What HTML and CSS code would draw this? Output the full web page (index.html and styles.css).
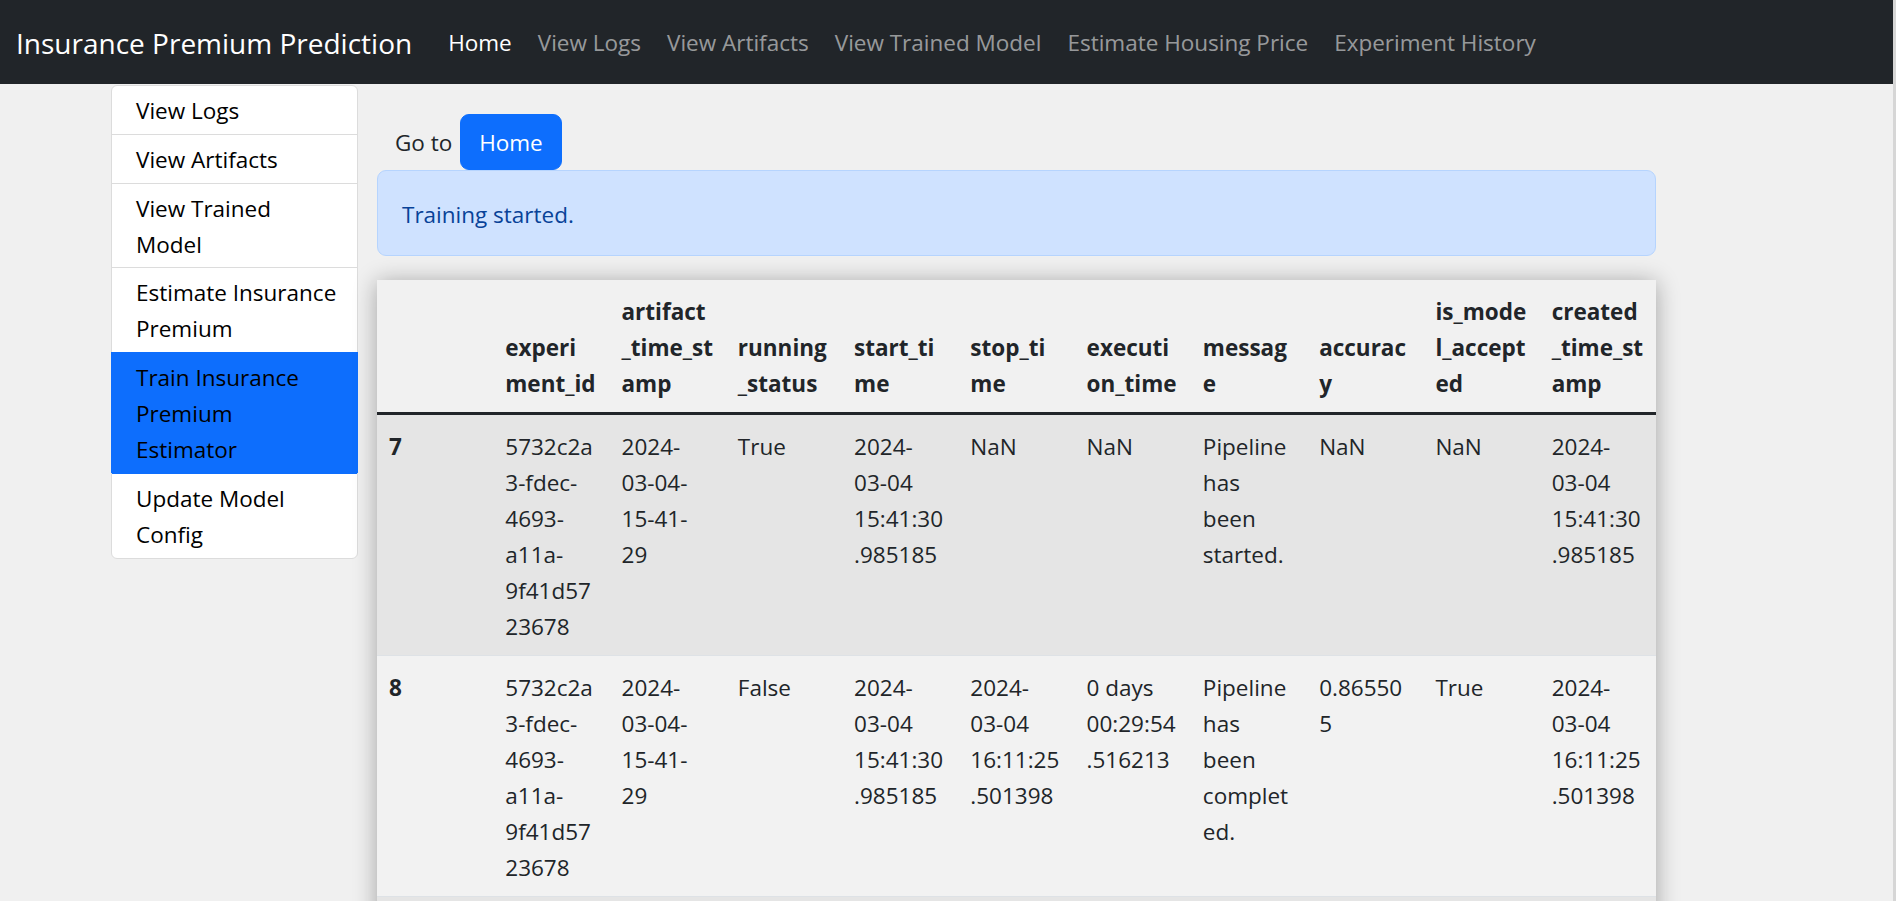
FILE: index.html
```html
<!DOCTYPE html>
<html lang="en">
<head>
<meta charset="utf-8">
<title>Insurance Premium Prediction</title>
<link rel="stylesheet" href="styles.css">
</head>
<body>
<nav class="navbar">
  <a class="brand" href="#">Insurance Premium Prediction</a>
  <ul class="nav">
    <li><a class="nav-link active" href="#">Home</a></li>
    <li><a class="nav-link" href="#">View Logs</a></li>
    <li><a class="nav-link" href="#">View Artifacts</a></li>
    <li><a class="nav-link" href="#">View Trained Model</a></li>
    <li><a class="nav-link" href="#">Estimate Housing Price</a></li>
    <li><a class="nav-link" href="#">Experiment History</a></li>
  </ul>
</nav>
<div class="layout">
  <aside class="sidebar">
    <a class="side-item" href="#">View Logs</a>
    <a class="side-item" href="#">View Artifacts</a>
    <a class="side-item" href="#">View Trained<br>Model</a>
    <a class="side-item" href="#">Estimate Insurance<br>Premium</a>
    <a class="side-item active" href="#">Train Insurance<br>Premium<br>Estimator</a>
    <a class="side-item" href="#">Update Model<br>Config</a>
  </aside>
  <main class="content">
    <div class="goto">Go to <a class="btn" href="#">Home</a></div>
    <div class="alert">Training started.</div>
    <div class="table-wrap">
      <table class="data">
        <thead>
          <tr>
            <th></th>
            <th>experi<br>ment_id</th>
            <th>artifact<br>_time_st<br>amp</th>
            <th>running<br>_status</th>
            <th>start_ti<br>me</th>
            <th>stop_ti<br>me</th>
            <th>executi<br>on_time</th>
            <th>messag<br>e</th>
            <th>accurac<br>y</th>
            <th>is_mode<br>l_accept<br>ed</th>
            <th>created<br>_time_st<br>amp</th>
          </tr>
        </thead>
        <tbody>
          <tr>
            <th>7</th>
            <td>5732c2a<br>3-fdec-<br>4693-<br>a11a-<br>9f41d57<br>23678</td>
            <td>2024-<br>03-04-<br>15-41-<br>29</td>
            <td>True</td>
            <td>2024-<br>03-04<br>15:41:30<br>.985185</td>
            <td>NaN</td>
            <td>NaN</td>
            <td>Pipeline<br>has<br>been<br>started.</td>
            <td>NaN</td>
            <td>NaN</td>
            <td>2024-<br>03-04<br>15:41:30<br>.985185</td>
          </tr>
          <tr>
            <th>8</th>
            <td>5732c2a<br>3-fdec-<br>4693-<br>a11a-<br>9f41d57<br>23678</td>
            <td>2024-<br>03-04-<br>15-41-<br>29</td>
            <td>False</td>
            <td>2024-<br>03-04<br>15:41:30<br>.985185</td>
            <td>2024-<br>03-04<br>16:11:25<br>.501398</td>
            <td>0 days<br>00:29:54<br>.516213</td>
            <td>Pipeline<br>has<br>been<br>complet<br>ed.</td>
            <td>0.86550<br>5</td>
            <td>True</td>
            <td>2024-<br>03-04<br>16:11:25<br>.501398</td>
          </tr>
          <tr>
            <th>9</th>
            <td>5732c2a<br>3-fdec-<br>4693-<br>a11a-<br>9f41d57<br>23678</td>
            <td>2024-<br>03-04-<br>15-41-<br>29</td>
            <td>False</td>
            <td>2024-<br>03-04<br>15:41:30<br>.985185</td>
            <td>2024-<br>03-04<br>16:11:25<br>.501398</td>
            <td>0 days<br>00:29:54<br>.516213</td>
            <td>Pipeline<br>has<br>been<br>complet<br>ed.</td>
            <td>0.86550<br>5</td>
            <td>True</td>
            <td>2024-<br>03-04<br>16:11:25<br>.501398</td>
          </tr>
        </tbody>
      </table>
    </div>
  </main>
</div>
</body>
</html>
```

FILE: styles.css
```css
* { box-sizing: border-box; }

html { overflow: hidden; }

body {
  margin: 0;
  background: #f0f0f0;
  border-right: 3px solid #d6d6d6;
  min-height: 100vh;
  font-family: "Open Sans", "Noto Sans", sans-serif;
  font-size: 22.5px;
  line-height: 36px;
  color: #212529;
}

a { text-decoration: none; }

.navbar {
  height: 84px;
  background: #212529;
  display: flex;
  align-items: center;
  padding: 2px 0 0 16px;
}

.brand {
  color: #fff;
  font-size: 28px;
  line-height: 42px;
  margin-right: 23px;
  white-space: nowrap;
}

.nav {
  list-style: none;
  margin: 0;
  padding: 0;
  display: flex;
}

.nav-link {
  display: block;
  padding: 0 13px;
  white-space: nowrap;
  color: rgba(255, 255, 255, 0.55);
}

.nav-link.active { color: #fff; }

.layout {
  display: flex;
  align-items: flex-start;
  padding-left: 111px;
  gap: 19px;
}

.sidebar {
  width: 247px;
  flex: none;
  margin-top: 1px;
  background: #fff;
  border: 1px solid #dcdcdc;
  border-radius: 6px;
  display: flex;
  flex-direction: column;
}

.side-item {
  display: block;
  padding: 7px 24px 4.8px;
  white-space: nowrap;
  color: #000;
  border-top: 1px solid #dcdcdc;
}

.side-item:first-child {
  border-top: 0;
  border-radius: 6px 6px 0 0;
}

.side-item:last-child { border-radius: 0 0 6px 6px; }

.side-item.active {
  background: #0d6efd;
  border-top-color: #0d6efd;
  margin: 0 -1px;
  padding: 7px 25px 4.8px;
  color: #000;
}

.side-item.active + .side-item { border-top-color: #0d6efd; }

.content { width: 1279px; flex: none; }

.goto { padding: 30px 18px 0; }

.btn {
  display: inline-block;
  margin-left: 2px;
  padding: 10px 18px 8px;
  border: 1px solid #0d6efd;
  border-radius: 9px;
  background: #0d6efd;
  color: #fff;
  vertical-align: baseline;
}

.alert {
  padding: 26px 24px 22px;
  border: 1px solid #b6d4fe;
  border-radius: 9px;
  background: #cfe2ff;
  color: #084298;
}

.table-wrap {
  margin-top: 24px;
  box-shadow: 0 2px 22px rgba(0, 0, 0, 0.32);
}

.data {
  width: 100%;
  border-collapse: collapse;
  table-layout: fixed;
  background: #f2f2f2;
}

.data th,
.data td {
  padding: 14px 12px 10px;
  text-align: left;
  vertical-align: top;
  white-space: nowrap;
  border-bottom: 1px solid #dee2e6;
}

.data th { font-weight: 700; }

.data thead th {
  vertical-align: bottom;
  background: #f1f1f1;
  border-bottom: 3px solid #212529;
}

.data tbody tr:nth-child(odd) th,
.data tbody tr:nth-child(odd) td { background: #e5e5e5; }
```
